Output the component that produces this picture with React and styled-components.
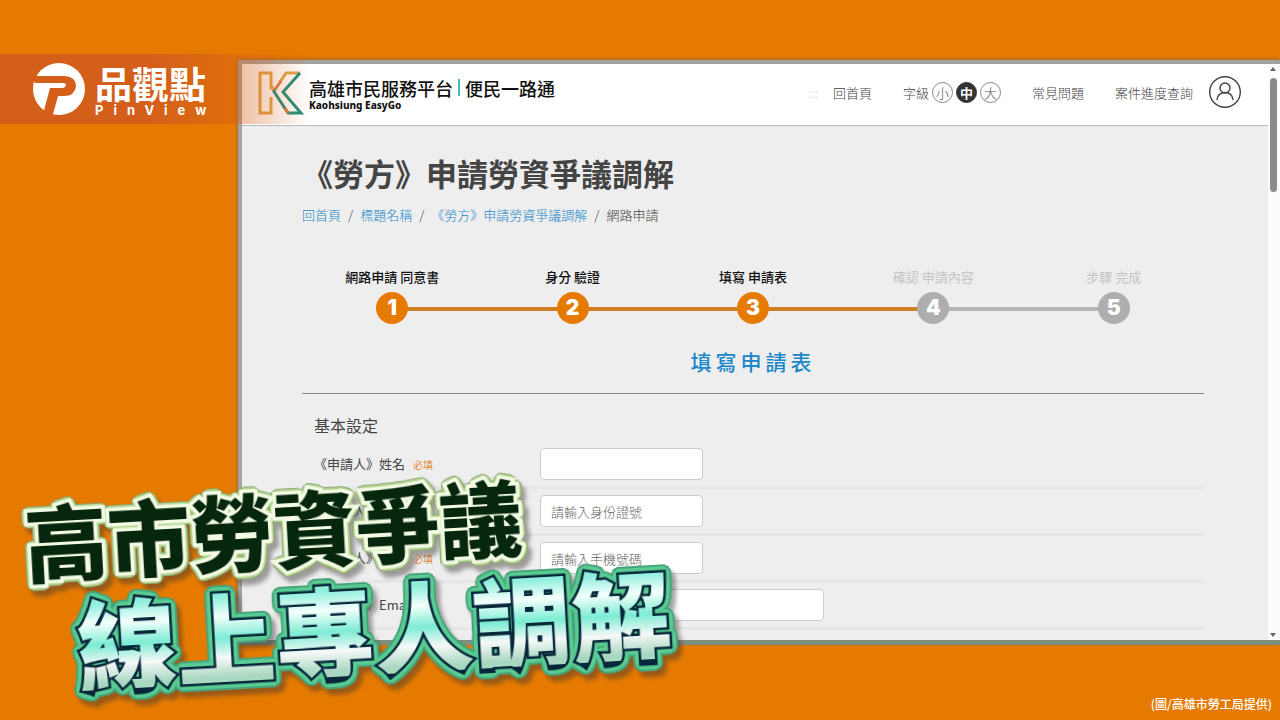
import React from 'react';
import styled, { createGlobalStyle, css } from 'styled-components';

const GlobalStyle = createGlobalStyle`
  *, *::before, *::after { box-sizing: border-box; }
  body {
    margin: 0;
    background: #e67a00;
    color: #444;
    font-family: 'Noto Sans CJK TC', 'Noto Sans', sans-serif;
    font-size: 13px;
    line-height: 20px;
  }
  h1, h2, h3, p, ol { margin: 0; padding: 0; }
  a { color: inherit; text-decoration: none; }
`;

//page frame
const Poster = styled.div`
  position: relative;
  min-height: 100vh;
  padding: 60px 0 0 238px;
  overflow: hidden;
`;

const Screen = styled.div`
  display: flex;
  height: 585px;
  border: 4px solid #a6a29e;
  border-right: 0;
  border-bottom: 5px solid #809080;
  background: #eee;
  box-shadow: -1px -1px 3px rgba(120, 100, 80, 0.7);
`;

const Site = styled.div`
  flex: 1;
  min-width: 0;
  overflow: hidden;
`;

const ScrollBar = styled.div`
  display: flex;
  flex-direction: column;
  align-items: center;
  justify-content: space-between;
  width: 12px;
  padding: 3px 2px 2px 0;
  background: #fcfcfc;
`;

const ScrollThumb = styled.div`
  flex: 0 0 114px;
  width: 7px;
  margin: 6px 0 auto;
  border-radius: 4px;
  background: #8b8b8b;
`;

const Arrow = styled.svg`
  display: block;
  width: 6px;
  height: 5px;
  fill: #666;
`;

//site header
const Header = styled.header`
  display: flex;
  align-items: center;
  justify-content: space-between;
  height: 62px;
  padding: 0 26px 4px 16px;
  border-bottom: 1px solid #bbb;
  background: #fff;
`;

const Brand = styled.a`
  display: flex;
  align-items: center;
  gap: 5px;
  color: #111;
`;

const BrandMark = styled.svg`
  width: 46px;
  height: 46px;
  fill: none;
  stroke-width: 3;
`;

const BrandText = styled.div`
  display: flex;
  flex-direction: column;
`;

const BrandName = styled.div`
  display: flex;
  align-items: center;
  gap: 5px;
  font-size: 18px;
  font-weight: 500;
  line-height: 24px;
  white-space: nowrap;
`;

const BrandLine = styled.span`
  width: 2px;
  height: 17px;
  background: #49b5b8;
`;

const BrandSub = styled.small`
  font-family: 'Noto Sans', sans-serif;
  font-size: 10px;
  font-weight: 800;
  line-height: 10px;
`;

const Nav = styled.nav`
  display: flex;
  align-items: center;
  gap: 31px;
  font-weight: 300;
  white-space: nowrap;
`;

const Tools = styled.div`
  display: flex;
  align-items: center;
  gap: 15px;
`;

const Skip = styled.a`
  color: #ddd;
`;

const FontSizes = styled.div`
  display: flex;
  align-items: center;
  gap: 3px;
`;

const SizeButton = styled.button`
  width: 21px;
  height: 21px;
  padding: 0;
  border: 1px solid ${props => (props.$active ? '#333' : '#888')};
  border-radius: 50%;
  background: ${props => (props.$active ? '#333' : '#fff')};
  color: ${props => (props.$active ? '#fff' : '#555')};
  font: inherit;
  font-weight: ${props => (props.$active ? 700 : 300)};
  line-height: 19px;
`;

const UserButton = styled.button`
  display: block;
  width: 34px;
  height: 34px;
  padding: 0;
  border: 0;
  background: none;
`;

const Content = styled.main`
  padding: 26px 64px 0 60px;
`;

const Title = styled.h1`
  color: #444;
  font-size: 31px;
  font-weight: 700;
  line-height: 42px;
`;

const Crumbs = styled.nav`
  display: flex;
  gap: 7px;
  margin-top: 11px;
  font-weight: 300;
  a { color: #1b87c9; }
`;

//progress steps
const Steps = styled.ol`
  display: grid;
  grid-template-columns: repeat(5, 1fr);
  margin-top: 42px;
  list-style: none;
`;

const Step = styled.li`
  position: relative;
  display: flex;
  flex-direction: column;
  align-items: center;
  gap: 5px;
  color: ${props => (props.$done ? '#111' : '#c4c4c4')};
  font-weight: ${props => (props.$done ? 500 : 400)};

  &:not(:first-child)::before {
    content: '';
    position: absolute;
    right: 50%;
    bottom: 13px;
    width: 100%;
    height: 4px;
    background: ${props => (props.$reached ? '#d08024' : '#b5b5b5')};
  }
`;

const StepNumber = styled.span`
  position: relative;
  z-index: 1;
  width: 32px;
  height: 32px;
  border-radius: 50%;
  background: ${props => (props.$done ? '#e67a00' : '#aeaeae')};
  color: #fff;
  font-family: Inter, sans-serif;
  font-size: 21px;
  font-weight: 900;
  line-height: 32px;
  text-align: center;
`;

//form
const FormTitle = styled.h2`
  padding: 20px 0 14px;
  border-bottom: 1px solid #888;
  color: #1b87c9;
  font-size: 21px;
  font-weight: 500;
  letter-spacing: 4px;
  line-height: 35px;
  text-align: center;
`;

const SectionTitle = styled.h3`
  padding: 19px 12px 5px;
  font-size: 16px;
  font-weight: 400;
  line-height: 24px;
`;

const Row = styled.div`
  display: flex;
  align-items: center;
  height: 47px;
  padding-left: 12px;
  border-bottom: 3px solid #e6e6e6;
`;

const Label = styled.label`
  flex: 0 0 226px;
`;

const Required = styled.em`
  margin-left: 8px;
  color: #e08a3c;
  font-size: 10px;
  font-style: normal;
`;

const Field = styled.input`
  width: ${props => (props.$wide ? '284px' : '163px')};
  height: 32px;
  padding: 0 10px;
  border: 1px solid #ccc;
  border-radius: 4px;
  background: #fff;
  font: inherit;
  &::placeholder { color: #666; opacity: 1; font-weight: 300; }
`;

//what lies over the screen
const Ribbon = styled.div`
  position: absolute;
  top: 54px;
  left: 0;
  display: flex;
  align-items: center;
  gap: 9px;
  width: 310px;
  height: 70px;
  padding-left: 32px;
  background: linear-gradient(90deg, #d45f1b 0, #d45f1b 150px, rgba(212, 95, 27, 0.4) 240px, rgba(212, 95, 27, 0) 310px);
  color: #fff;
`;

const PinMark = styled.svg`
  width: 54px;
  height: 54px;
`;

const PinName = styled.div`
  font-size: 37px;
  font-weight: 700;
  line-height: 42px;
`;

const PinSub = styled.div`
  font-family: Inter, sans-serif;
  font-size: 13px;
  font-weight: 700;
  letter-spacing: 10px;
  line-height: 12px;
  white-space: nowrap;
`;

//rounded outline made of shadows set round a circle
const ring = (radius, color) =>
  Array.from({ length: 24 }, (_, i) => {
    const angle = (i * Math.PI) / 12;
    const x = (Math.cos(angle) * radius).toFixed(1);
    const y = (Math.sin(angle) * radius).toFixed(1);
    return `${x}px ${y}px 0 ${color}`;
  }).join(', ');

const Headline = styled.div`
  position: absolute;
  top: 480px;
  left: 27px;
  transform: rotate(-3.2deg);
`;

const darkLine = css`
  font-size: 83px;
  line-height: 86px;
  color: #06260d;
  -webkit-text-stroke: 7px #f3fbe4;
  &::before {
    color: #b9d694;
    -webkit-text-stroke: 7px #b9d694;
    text-shadow: ${ring(5, '#b9d694')}, ${ring(6, '#8aa873')};
  }
  &::after { content: none; }
`;

const mintLine = css`
  margin: 12px 0 0 47px;
  font-size: 99px;
  line-height: 98px;
  color: #06283a;
  -webkit-text-stroke: 5px #06283a;
  &::before {
    color: #5acb92;
    -webkit-text-stroke: 6px #5acb92;
    text-shadow: ${ring(6, '#5acb92')}, ${ring(8, '#46a57d')};
  }
  &::after {
    color: transparent;
    -webkit-text-stroke: 0;
    background: linear-gradient(#8fefdc 12%, #f4fffc 32%, #7cecd3 54%, #f6f8f8 74%, #a9d8c1 94%);
    background-clip: text;
  }
`;

const HeadlineText = styled.p`
  position: relative;
  font-weight: 900;
  white-space: nowrap;
  paint-order: stroke fill;
  stroke-linejoin: round;
  filter: drop-shadow(4px 6px 2px rgba(60, 50, 50, 0.45));

  &::before, &::after {
    position: absolute;
    top: 0;
    left: 0;
    content: '${props => props.$text}';
  }
  &::before { z-index: -1; }
  ${props => (props.$mint ? mintLine : darkLine)}
`;

const Credit = styled.p`
  position: absolute;
  right: 8px;
  bottom: 6px;
  color: #fff;
  font-size: 12px;
  font-weight: 500;
`;

const steps = ['網路申請 同意書', '身分 驗證', '填寫 申請表', '確認 申請內容', '步驟 完成'];

const fields = [
  { id: 'name', label: '《申請人》姓名', required: true },
  { id: 'idno', label: '《申請人》證號', required: true, hint: '請輸入身份證號' },
  { id: 'mobile', label: '《申請人》手機', required: true, hint: '請輸入手機號碼' },
  { id: 'email', label: '《申請人》Email', wide: true },
];

const App = () => (
  <Poster>
    <GlobalStyle />
    <Screen>
      <Site>
        <Header>
          <Brand href="#">
            <BrandMark viewBox="0 0 46 46">
              <path d="M16 18H13V3H2V43H13V27" stroke="#dfa545" />
              <path d="M22 12L28 3H42" stroke="#dfa545" />
              <path d="M23 11L16 21" stroke="#e27b45" />
              <path d="M42 3L25 22L43 43H30L15 20" stroke="#218f7c" />
              <path d="M27 38L30 43" stroke="#e27b45" />
            </BrandMark>
            <BrandText>
              <BrandName>高雄市民服務平台<BrandLine />便民一路通</BrandName>
              <BrandSub>Kaohsiung EasyGo</BrandSub>
            </BrandText>
          </Brand>
          <Nav>
            <Tools>
              <Skip href="#main">:::</Skip>
              <a href="#">回首頁</a>
            </Tools>
            <FontSizes>
              字級
              <SizeButton>小</SizeButton>
              <SizeButton $active>中</SizeButton>
              <SizeButton>大</SizeButton>
            </FontSizes>
            <a href="#">常見問題</a>
            <Tools>
              <a href="#">案件進度查詢</a>
              <UserButton aria-label="會員">
                <svg width="34" height="34" viewBox="0 0 34 34" fill="none" stroke="#444" strokeWidth="1.4">
                  <circle cx="17" cy="16" r="15.3" />
                  <circle cx="17" cy="12" r="5" />
                  <path d="M9 24C9 14 25 14 25 24" />
                </svg>
              </UserButton>
            </Tools>
          </Nav>
        </Header>
        <Content id="main">
          <Title>《勞方》申請勞資爭議調解</Title>
          <Crumbs>
            <a href="#">回首頁</a>/<a href="#">標題名稱</a>/
            <a href="#">《勞方》申請勞資爭議調解</a>/<span>網路申請</span>
          </Crumbs>
          <Steps>
            {steps.map((step, i) => (
              <Step key={step} $done={i < 3} $reached={i < 4}>
                {step}
                <StepNumber $done={i < 3}>{i + 1}</StepNumber>
              </Step>
            ))}
          </Steps>
          <FormTitle>填寫申請表</FormTitle>
          <SectionTitle>基本設定</SectionTitle>
          {fields.map(field => (
            <Row key={field.id}>
              <Label htmlFor={field.id}>
                {field.label}
                {field.required && <Required>必填</Required>}
              </Label>
              <Field id={field.id} placeholder={field.hint} $wide={field.wide} />
            </Row>
          ))}
        </Content>
      </Site>
      <ScrollBar>
        <Arrow viewBox="0 0 6 5"><path d="M0 4L3 0L6 4Z" /></Arrow>
        <ScrollThumb />
        <Arrow viewBox="0 0 6 5"><path d="M0 0L3 4L6 0Z" /></Arrow>
      </ScrollBar>
    </Screen>
    <Ribbon>
      <PinMark viewBox="0 0 54 54">
        <circle cx="27" cy="27" r="26" fill="#fff" />
        <path d="M0 14H33Q44 15 44 24Q43 34 32 34H26L20 56H10L18 26H31Q34 25 34 23Q34 21 31 21H3Z" fill="#d45f1b" />
      </PinMark>
      <div>
        <PinName>品觀點</PinName>
        <PinSub>PinView</PinSub>
      </div>
    </Ribbon>
    <Headline>
      <HeadlineText $text="高市勞資爭議">高市勞資爭議</HeadlineText>
      <HeadlineText $mint $text="線上專人調解">線上專人調解</HeadlineText>
    </Headline>
    <Credit>(圖/高雄市勞工局提供)</Credit>
  </Poster>
);

export default App;
